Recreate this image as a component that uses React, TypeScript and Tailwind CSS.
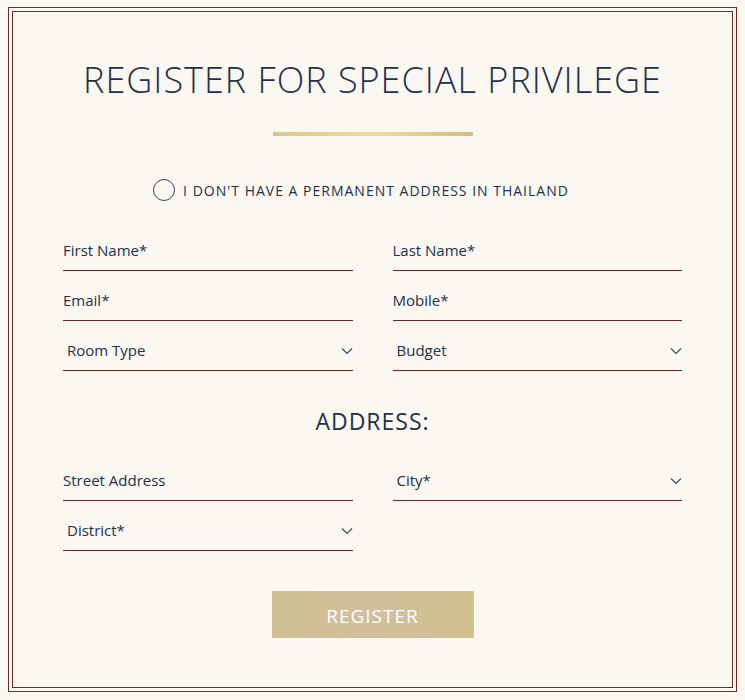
import React from 'react';

const Chevron: React.FC = () => (
  <svg width="12" height="8" viewBox="0 0 12 8" fill="none" className="shrink-0">
    <path d="M1 1.5L6 6.5L11 1.5" stroke="#3a4560" strokeWidth="1.1" />
  </svg>
);

const TextField: React.FC<{ label: string }> = ({ label }) => (
  <div className="h-[40px] flex items-center border-b border-[#6b2a22] text-[15px] text-[#22304d]">
    {label}
  </div>
);

const SelectField: React.FC<{ label: string }> = ({ label }) => (
  <div className="h-[40px] flex items-center justify-between pl-1 border-b border-[#6b2a22] text-[15px] text-[#22304d]">
    <span>{label}</span>
    <Chevron />
  </div>
);

export default function App() {
  return (
    <div className="bg-[#fbf8f1] min-h-[700px] px-2 pt-[7px] pb-[6px] font-['Open_Sans',sans-serif]">
      <div className="border border-[#6b2a22] p-[3px]">
        <div className="border border-[#6b2a22] h-[677px] px-[50px] pt-[42px]">
          {/* Heading */}
          <h1 className="text-center text-[36px] font-light tracking-[1px] text-[#22304d] leading-[52px]">
            REGISTER FOR SPECIAL PRIVILEGE
          </h1>
          <div className="mx-auto mt-[26px] w-[200px] h-[4px] bg-gradient-to-r from-[#d9c68f] via-[#ecdcab] to-[#d0bd86]" />

          {/* Radio */}
          <div className="mt-[43px] pr-[23px] flex items-center justify-center gap-[8px] text-[14px] tracking-[1px] text-[#22304d]">
            <span className="w-[22px] h-[22px] rounded-full border border-[#3a4560]" />
            <span>I DON'T HAVE A PERMANENT ADDRESS IN THAILAND</span>
          </div>

          {/* Personal */}
          <div className="mt-[30px] grid grid-cols-2 gap-x-[40px] gap-y-[10px]">
            <TextField label="First Name*" />
            <TextField label="Last Name*" />
            <TextField label="Email*" />
            <TextField label="Mobile*" />
            <SelectField label="Room Type" />
            <SelectField label="Budget" />
          </div>

          <h2 className="mt-[28px] text-center text-[23px] tracking-[1px] text-[#22304d] leading-[44px]">ADDRESS:</h2>

          <div className="mt-[18px] grid grid-cols-2 gap-x-[40px] gap-y-[10px]">
            <TextField label="Street Address" />
            <SelectField label="City*" />
            <SelectField label="District*" />
          </div>

          <div className="mt-[40px] flex justify-center">
            <button className="w-[202px] h-[47px] pt-[3px] bg-gradient-to-r from-[#cfbf92] via-[#d2c09d] to-[#d2c091] text-white text-[19px] tracking-[1px]">
              REGISTER
            </button>
          </div>
        </div>
      </div>
    </div>
  );
}
